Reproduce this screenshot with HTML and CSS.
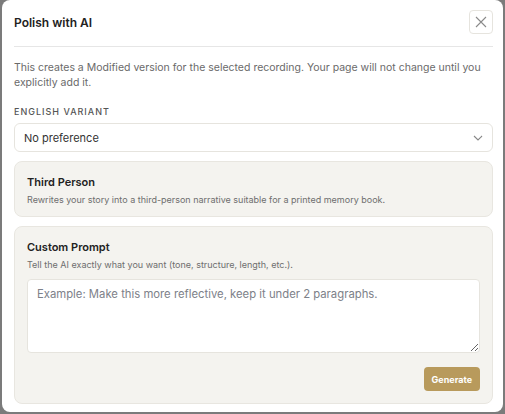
FILE: index.html
```html
<!DOCTYPE html>
<html lang="en">
<head>
    <meta charset="UTF-8">
    <meta name="viewport" content="width=device-width, initial-scale=1.0">
    <title>Polish with AI</title>
    <link rel="stylesheet" href="styles.css">
</head>
<body>
    <div class="modal">
        <div class="modal-header">
            <h1>Polish with AI</h1>
            <button class="close-btn" aria-label="Close">
                <svg width="12" height="12" viewBox="0 0 12 12">
                    <path d="M1 1 L11 11 M11 1 L1 11" stroke="#8a8a8a" stroke-width="1.1" fill="none"/>
                </svg>
            </button>
        </div>

        <p class="intro">This creates a Modified version for the selected recording. Your page will not change until you explicitly add it.</p>

        <label class="field-label" for="variant">English variant</label>
        <div class="select-wrap">
            <select id="variant">
                <option>No preference</option>
                <option>American English</option>
                <option>British English</option>
            </select>
            <svg class="chevron" width="10" height="6" viewBox="0 0 10 6">
                <path d="M1 1 L5 5 L9 1" stroke="#888" stroke-width="1.1" fill="none"/>
            </svg>
        </div>

        <div class="option-card">
            <h2>Third Person</h2>
            <p>Rewrites your story into a third-person narrative suitable for a printed memory book.</p>
        </div>

        <div class="option-card custom">
            <h2>Custom Prompt</h2>
            <p>Tell the AI exactly what you want (tone, structure, length, etc.).</p>
            <textarea placeholder="Example: Make this more reflective, keep it under 2 paragraphs."></textarea>
            <div class="actions">
                <button class="generate-btn">Generate</button>
            </div>
        </div>
    </div>
</body>
</html>
```

FILE: styles.css
```css
body {
    margin: 0;
    padding: 0;
    background-color: #7b7b7b;
    font-family: 'Inter', 'Liberation Sans', sans-serif;
    color: #222;
}
.modal {
    margin-left: 2px;
    width: 501px;
    height: 412px;
    box-sizing: border-box;
    padding: 0 10px 0 12px;
    background-color: white;
    border-radius: 8px;
    overflow: hidden;
}
.modal-header {
    display: flex;
    justify-content: space-between;
    align-items: center;
    padding: 10px 0 12px;
    border-bottom: 1px solid #e6e6e6;
}
h1 {
    margin: 0;
    font-size: 12px;
    font-weight: 600;
    color: #222;
}
.close-btn {
    width: 24px;
    height: 24px;
    padding: 0;
    display: flex;
    align-items: center;
    justify-content: center;
    background: white;
    border: 1px solid #e6e4de;
    border-radius: 4px;
    cursor: pointer;
}
.intro {
    margin: 13px 0 0;
    font-size: 10.5px;
    line-height: 15px;
    color: #6a6a6a;
}
.field-label {
    display: block;
    margin-top: 16px;
    font-size: 9px;
    font-weight: 500;
    letter-spacing: 1px;
    text-transform: uppercase;
    color: #555;
}
.select-wrap {
    position: relative;
    margin-top: 6px;
}
.select-wrap select {
    width: 100%;
    height: 29px;
    padding: 0 9px;
    appearance: none;
    background: white;
    border: 1px solid #e6e4de;
    border-radius: 6px;
    font-family: inherit;
    font-size: 11px;
    color: #333;
}
.chevron {
    position: absolute;
    right: 10px;
    top: 12px;
    pointer-events: none;
}
.option-card {
    margin-top: 9px;
    padding: 13px 12px 11px;
    background-color: #f4f3ef;
    border: 1px solid #e8e6e0;
    border-radius: 8px;
}
.option-card h2 {
    margin: 0;
    font-size: 11px;
    font-weight: 600;
    color: #222;
}
.option-card p {
    margin: 5px 0 0;
    font-size: 9px;
    color: #6e6e6e;
}
.custom {
    padding-bottom: 12px;
}
.custom textarea {
    display: block;
    width: 100%;
    height: 74px;
    box-sizing: border-box;
    margin-top: 9px;
    padding: 7px 9px;
    border: 1px solid #e6e4de;
    border-radius: 4px;
    font-family: inherit;
    font-size: 11.3px;
    color: #333;
    resize: vertical;
}
.custom textarea::placeholder {
    color: #7d8189;
}
.actions {
    display: flex;
    justify-content: flex-end;
    margin-top: 14px;
}
.generate-btn {
    height: 24px;
    padding: 0 8px;
    border: none;
    border-radius: 4px;
    background-color: #b89a5c;
    color: white;
    font-family: inherit;
    font-size: 9px;
    font-weight: 700;
    cursor: pointer;
}
```
